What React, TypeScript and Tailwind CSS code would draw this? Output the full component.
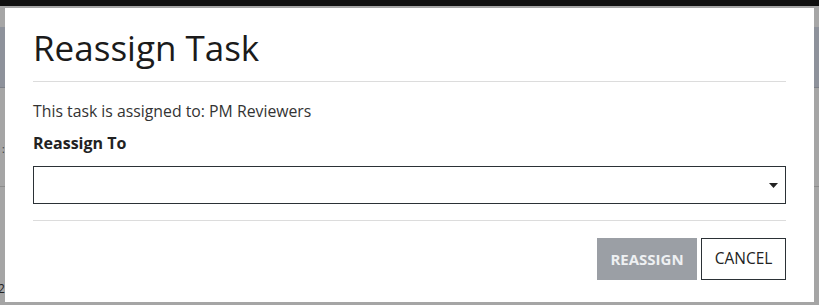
import React from "react";

export default function App() {
  return (
    <div
      className="relative h-[305px] w-[819px] overflow-hidden bg-[#a4a4a4]"
      style={{ fontFamily: '"Open Sans", "Noto Sans", sans-serif' }}
    >
      {/* dimmed page behind the modal */}
      <div className="h-[6px] bg-[#111111]" />
      <div className="h-[21px] bg-[#a6a6a6]" />
      <div className="h-[61px] border-b border-[#7d8088] bg-[#8e929b]" />
      <div className="flex h-[98px] flex-col bg-[#a5a5a5] pl-[2px] pt-[56px] text-[10px] leading-[11px] text-[#333]">
        <span>:</span>
      </div>
      <div className="h-[1px] bg-[#8c8c8c]" />
      <div className="flex h-[118px] flex-col justify-end bg-[#a5a5a5] pb-[10px] text-[12px] leading-[12px] text-[#222]">
        <span className="-ml-[2px]">2.</span>
      </div>

      {/* modal */}
      <div className="absolute left-[5px] top-[8px] flex h-[294px] w-[809px] flex-col bg-white px-[28px] pt-[18px]">
        <h2 className="text-[35px] leading-[44px] font-normal text-[#1b1b1b]">
          Reassign Task
        </h2>
        <div className="mt-[11px] h-[1px] bg-[#dcdcdc]" />
        <p className="mt-[17px] text-[15.8px] leading-[24px] text-[#333333]">
          This task is assigned to: PM Reviewers
        </p>
        <label className="mt-[8px] text-[16px] leading-[24px] font-bold text-[#222222]">
          Reassign To
        </label>
        <div className="mt-[11px] flex h-[38px] items-center justify-end border border-[#2b3136] pr-[7px]">
          <svg width="9" height="5" viewBox="0 0 9 5">
            <path d="M0 0 H9 L4.5 5 Z" fill="#222" />
          </svg>
        </div>
        <div className="mt-[16px] h-[1px] bg-[#dcdcdc]" />
        <div className="mt-[17px] flex justify-end gap-[4px]">
          <button className="h-[42px] w-[100px] bg-[#9b9fa5] text-[15px] font-bold text-[#eef0f2]">
            REASSIGN
          </button>
          <button className="h-[42px] w-[85px] border border-[#2b3136] bg-white text-[15.5px] text-[#222]">
            CANCEL
          </button>
        </div>
      </div>
    </div>
  );
}
